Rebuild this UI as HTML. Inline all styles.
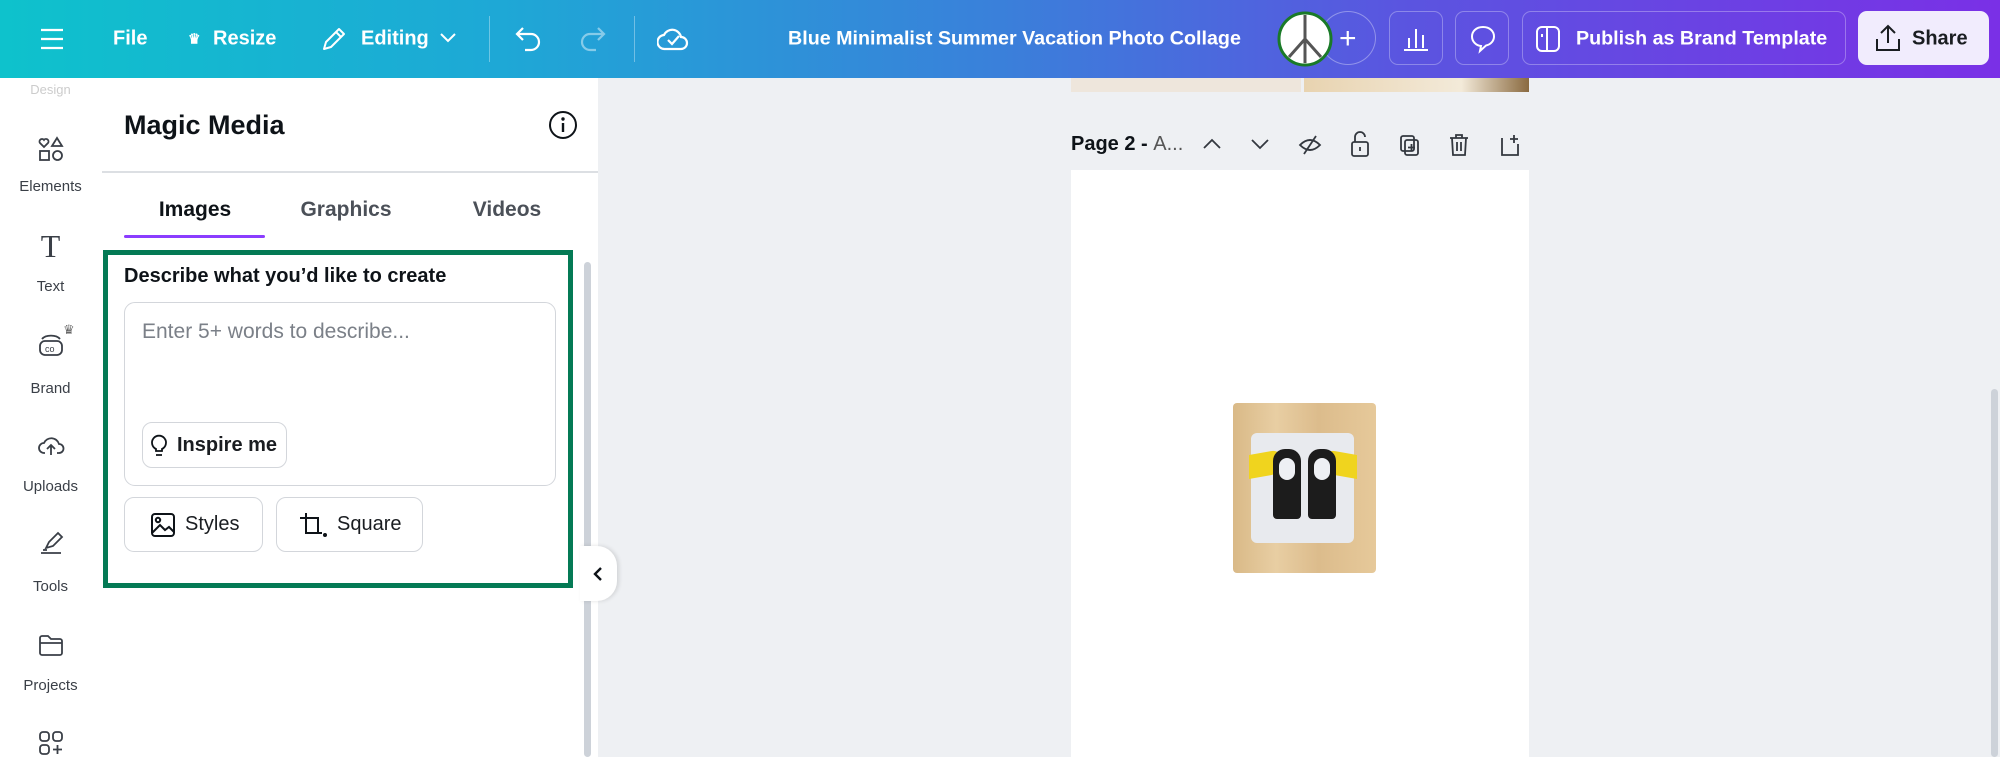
<!DOCTYPE html>
<html><head><meta charset="utf-8"><style>
*{margin:0;padding:0;box-sizing:border-box}
body{width:2000px;height:757px;overflow:hidden;background:#eef0f3;font-family:"Liberation Sans",sans-serif;position:relative}
.abs{position:absolute}
#top{left:0;top:0;width:2000px;height:78px;background:linear-gradient(90deg,#0ec2cc 0%,#1ea8d6 25%,#3a80da 50%,#5a55e0 70%,#7a30e6 100%);color:#fff}
#top .t{position:absolute;top:39px;transform:translateY(-50%);font-size:21px;font-weight:bold;white-space:nowrap}
.btnb{position:absolute;top:11px;height:54px;border:1.5px solid rgba(255,255,255,.3);border-radius:9px}
#side{left:0;top:78px;width:101px;height:679px;background:#fff}
.si{position:absolute;left:0;width:101px;text-align:center;font-size:15px;color:#3a3f47}
#panel{left:101px;top:78px;width:497px;height:679px;background:#fff}
.tab{position:absolute;top:210px;transform:translate(-50%,-50%);font-size:21px;color:#4b5058;font-weight:bold}
.b{position:absolute;border:1.5px solid #d3d6db;border-radius:10px;background:#fff;font-size:20px;color:#1a1d21}
</style></head><body>
<div id="top" class="abs">
 <svg class="abs" style="left:40px;top:28px" width="24" height="22"><path d="M1 2h22M1 11h22M1 20h22" stroke="#fff" stroke-width="2.2"/></svg>
 <div class="t" style="left:113px;font-size:20px">File</div>
 <div class="t" style="left:188px;font-size:14px">♛</div>
 <div class="t" style="left:213px;font-size:20px">Resize</div>
 <svg class="abs" style="left:320px;top:25px" width="28" height="28"><path d="M4 24l2-7L19 4l5 5L11 22z M16 7l5 5" stroke="#fff" stroke-width="2" fill="none" stroke-linejoin="round"/></svg>
 <div class="t" style="left:361px;font-size:20px">Editing</div>
 <svg class="abs" style="left:440px;top:33px" width="16" height="10"><path d="M1 1l7 7 7-7" stroke="#fff" stroke-width="2" fill="none"/></svg>
 <div class="abs" style="left:489px;top:16px;width:1px;height:46px;background:rgba(255,255,255,.35)"></div>
 <svg class="abs" style="left:515px;top:26px" width="28" height="26"><path d="M8 2L2 8l6 6M2 8h14a8 8 0 010 16h-6" stroke="#fff" stroke-width="2.2" fill="none"/></svg>
 <svg class="abs" style="left:578px;top:26px" width="28" height="26"><path d="M20 2l6 6-6 6M26 8H12a8 8 0 000 16h6" stroke="rgba(255,255,255,.45)" stroke-width="2.2" fill="none"/></svg>
 <div class="abs" style="left:634px;top:16px;width:1px;height:46px;background:rgba(255,255,255,.35)"></div>
 <svg class="abs" style="left:657px;top:24px" width="32" height="28"><path d="M8 25h16a6 6 0 000-12 9 9 0 00-17-2A7 7 0 008 25z M11 16l4 4 7-8" stroke="#fff" stroke-width="2.2" fill="none"/></svg>
 <div class="t" style="left:788px;font-size:19.7px">Blue Minimalist Summer Vacation Photo Collage</div>
 <div class="abs" style="left:1320px;top:11px;width:56px;height:54px;border-radius:50%;border:1.5px solid rgba(255,255,255,.35)"></div>
 <div class="t" style="left:1339px;font-size:30px;font-weight:normal">+</div>
 <svg class="abs" style="left:1277px;top:11px" width="56" height="56"><circle cx="28" cy="28" r="26" fill="#fff" stroke="#1a7a28" stroke-width="3"/><path d="M28 4v48M28 28L12 46M28 28l16 18" stroke="#555" stroke-width="3"/></svg>
 <div class="btnb" style="left:1389px;width:54px"></div>
 <svg class="abs" style="left:1403px;top:26px" width="26" height="26"><path d="M1 24h24M6 22V12M13 22V3M20 22V9" stroke="#fff" stroke-width="2"/></svg>
 <div class="btnb" style="left:1455px;width:54px"></div>
 <svg class="abs" style="left:1469px;top:24px" width="28" height="30"><path d="M14 3C7 3 3 7.5 3 12.5c0 5 4 9 9 9.5l-1 5 6-5.5c5-1 8-5 8-9C25 7.5 21 3 14 3z" stroke="#fff" stroke-width="2" fill="none"/></svg>
 <div class="btnb" style="left:1522px;width:324px"></div>
 <svg class="abs" style="left:1535px;top:25px" width="26" height="28"><rect x="2" y="2" width="22" height="24" rx="5" stroke="#fff" stroke-width="2" fill="none"/><path d="M12 2v24M7 9v3" stroke="#fff" stroke-width="2"/></svg>
 <div class="t" style="left:1576px;font-size:19.7px">Publish as Brand Template</div>
 <div class="abs" style="left:1858px;top:11px;width:131px;height:54px;border-radius:9px;background:#f1ecfd"></div>
 <svg class="abs" style="left:1874px;top:23px" width="28" height="30"><path d="M14 20V3M7 10l7-7 7 7M3 16v11h22V16" stroke="#1a1d21" stroke-width="2" fill="none"/></svg>
 <div class="t" style="left:1912px;color:#1a1d21;font-size:20px">Share</div>
</div>
<div id="side" class="abs">
 <div class="si" style="top:4px;color:#ccc;font-size:13px">Design</div>
 <svg class="abs" style="left:38px;top:58px" width="26" height="26" fill="none" stroke="#3a3f47" stroke-width="1.8"><path d="M6 11L2 7a2.5 2.5 0 014-3 2.5 2.5 0 014 3z M19 2l5 8h-10z"/><rect x="2" y="15" width="9" height="9"/><circle cx="19.5" cy="19.5" r="4.5"/></svg>
 <div class="si" style="top:100px">Elements</div>
 <div class="si" style="top:150px;font-family:'Liberation Serif',serif;font-size:32px">T</div>
 <div class="si" style="top:200px">Text</div>
 <svg class="abs" style="left:38px;top:255px" width="28" height="24" fill="none" stroke="#3a3f47" stroke-width="1.8"><rect x="2" y="8" width="22" height="14" rx="5"/><path d="M4 6a10 6 0 0118 0"/><text x="7" y="19" font-size="9" fill="#3a3f47" stroke="none" font-family="Liberation Sans">co</text></svg>
 <div class="abs" style="left:63px;top:244px;color:#666;font-size:13px">♛</div>
 <div class="si" style="top:302px">Brand</div>
 <svg class="abs" style="left:37px;top:355px" width="28" height="24" fill="none" stroke="#3a3f47" stroke-width="1.8"><path d="M8 20H7a5 5 0 010-10 8 8 0 0115 1 4.5 4.5 0 010 9h-2M14 22v-9M10 16l4-4 4 4"/></svg>
 <div class="si" style="top:400px">Uploads</div>
 <svg class="abs" style="left:38px;top:452px" width="28" height="26" fill="none" stroke="#3a3f47" stroke-width="1.8"><path d="M8 18l3-6L20 3l4 4-9 9z M3 23h20M5 20h4"/></svg>
 <div class="si" style="top:500px">Tools</div>
 <svg class="abs" style="left:38px;top:555px" width="26" height="24" fill="none" stroke="#3a3f47" stroke-width="1.8"><path d="M2 5a2 2 0 012-2h6l3 3h9a2 2 0 012 2v12a2 2 0 01-2 2H4a2 2 0 01-2-2z M2 10h22"/></svg>
 <div class="si" style="top:599px">Projects</div>
 <svg class="abs" style="left:38px;top:652px" width="26" height="26" fill="none" stroke="#3a3f47" stroke-width="1.8"><rect x="2" y="2" width="9" height="9" rx="3"/><rect x="15" y="2" width="9" height="9" rx="3"/><rect x="2" y="15" width="9" height="9" rx="3"/><path d="M19.5 15v9M15 19.5h9"/></svg>
</div>
<div id="panel" class="abs">
 <div class="abs" style="left:23px;top:32px;font-size:27px;font-weight:bold;color:#0e1318">Magic Media</div>
 <svg class="abs" style="left:447px;top:32px" width="30" height="30"><circle cx="15" cy="15" r="13" stroke="#0e1318" stroke-width="2" fill="none"/><path d="M15 13v9" stroke="#0e1318" stroke-width="2.4"/><circle cx="15" cy="9" r="1.7" fill="#0e1318"/></svg>
 <div class="abs" style="left:1px;top:93px;width:496px;height:1.5px;background:#dcdfe3"></div>
</div>
<div class="tab" style="left:195px;color:#0e1318">Images</div>
<div class="tab" style="left:346px">Graphics</div>
<div class="tab" style="left:507px">Videos</div>
<div class="abs" style="left:124px;top:235px;width:141px;height:3px;background:#8b3dff;border-radius:2px"></div>
<div class="abs" style="left:584px;top:262px;width:7px;height:495px;background:#cdd2d9;border-radius:4px"></div>
<div class="abs" style="left:103px;top:250px;width:470px;height:338px;border:5px solid #047a55"></div>
<div class="abs" style="left:124px;top:265px;font-size:20px;font-weight:bold;color:#0e1318">Describe what you’d like to create</div>
<div class="b" style="left:124px;top:302px;width:432px;height:184px;border-radius:11px"></div>
<div class="abs" style="left:142px;top:320px;font-size:21px;color:#7b8088">Enter 5+ words to describe...</div>
<div class="b" style="left:142px;top:422px;width:145px;height:46px;font-weight:bold;padding:11px 0 0 34px">Inspire me</div>
<svg class="abs" style="left:150px;top:434px" width="18" height="24" fill="none" stroke="#0e1318" stroke-width="1.8"><path d="M6 17v-2a7 7 0 116 0v2z M6 21h6"/></svg>
<div class="b" style="left:124px;top:497px;width:139px;height:55px;padding:15px 0 0 60px">Styles</div>
<svg class="abs" style="left:150px;top:512px" width="26" height="26" fill="none" stroke="#0e1318" stroke-width="2"><rect x="2" y="2" width="22" height="22" rx="3"/><circle cx="8" cy="8" r="2.2"/><path d="M2 21l8-8 5 5 4-3 5 5"/></svg>
<div class="b" style="left:276px;top:497px;width:147px;height:55px;padding:15px 0 0 60px">Square</div>
<svg class="abs" style="left:298px;top:511px" width="30" height="28" fill="none" stroke="#0e1318" stroke-width="2"><path d="M8 2v20h16M2 7h18v16"/><circle cx="27" cy="24" r="1" fill="#0e1318"/></svg>
<div class="abs" style="left:580px;top:546px;width:37px;height:55px;background:#fff;border-radius:0 20px 20px 0;box-shadow:2px 0 4px rgba(0,0,0,.12)"></div>
<svg class="abs" style="left:593px;top:566px" width="10" height="16"><path d="M8 2L2 8l6 6" stroke="#0e1318" stroke-width="2.4" fill="none"/></svg>
<div class="abs" style="left:1071px;top:78px;width:230px;height:14px;background:#eee6dc"></div>
<div class="abs" style="left:1304px;top:78px;width:225px;height:14px;background:linear-gradient(90deg,#e8d3b0,#f3ead9 70%,#8a6a40)"></div>
<div class="abs" style="left:1071px;top:133px;font-size:20px;color:#0e1318;font-weight:bold">Page 2 - <span style="font-weight:normal;color:#555">A...</span></div>
<svg class="abs" style="left:1200px;top:130px" width="340" height="30" fill="none" stroke="#33383f" stroke-width="1.8">
 <path d="M4 18l8-8 8 8"/><path d="M52 10l8 8 8-8"/>
 <path d="M100 15q10-10 20 0q-10 10-20 0z M104 24l12-18"/>
 <rect x="152" y="12" width="16" height="14" rx="2"/><path d="M155 12V7a5 5 0 0110 0M160 17v4"/>
 <rect x="201" y="6" width="13" height="15" rx="2"/><rect x="205" y="10" width="13" height="15" rx="2"/><path d="M211.5 14v7M208 17.5h7"/>
 <path d="M250 8h18M256 8V5h6v3M252 8l1 17h12l1-17M257 12v9M261 12v9"/>
 <path d="M302 8v17h16V14M310 9h8M314 5v8"/>
</svg>
<div class="abs" style="left:1071px;top:170px;width:458px;height:587px;background:#fff"></div>
<div class="abs" style="left:1233px;top:403px;width:143px;height:170px;border-radius:4px;background:linear-gradient(90deg,#d9b987,#e8cea3 30%,#dcbc8c 60%,#e6c99a);"></div>
<div class="abs" style="left:1251px;top:433px;width:103px;height:110px;border-radius:6px;background:#e8eaee"></div>
<div class="abs" style="left:1249px;top:452px;width:34px;height:24px;border-radius:0 14px 14px 0;background:#f0d41e;transform:skewY(-10deg)"></div>
<div class="abs" style="left:1323px;top:452px;width:34px;height:24px;border-radius:14px 0 0 14px;background:#f0d41e;transform:skewY(10deg)"></div>
<div class="abs" style="left:1273px;top:449px;width:28px;height:70px;border-radius:12px 12px 4px 4px;background:#1c1c1c"></div>
<div class="abs" style="left:1308px;top:449px;width:28px;height:70px;border-radius:12px 12px 4px 4px;background:#1c1c1c"></div>
<div class="abs" style="left:1279px;top:458px;width:16px;height:22px;border-radius:8px;background:#eef0f4"></div>
<div class="abs" style="left:1314px;top:458px;width:16px;height:22px;border-radius:8px;background:#eef0f4"></div>
<div class="abs" style="left:1991px;top:389px;width:7px;height:368px;background:#cdd2d9;border-radius:4px"></div>
</body></html>
